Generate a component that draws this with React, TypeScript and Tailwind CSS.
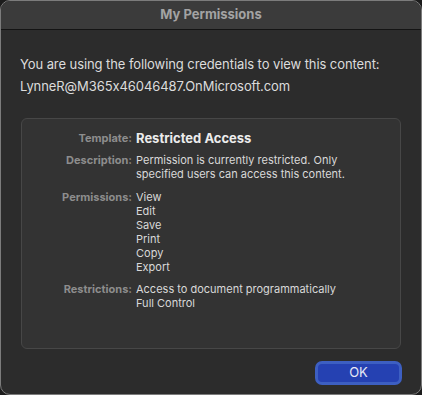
const rows = [
  { label: "Description:", values: ["Permission is currently restricted. Only", "specified users can access this content."] },
  { label: "Permissions:", values: ["View", "Edit", "Save", "Print", "Copy", "Export"] },
  { label: "Restrictions:", values: ["Access to document programmatically", "Full Control"] },
];

function Row({ label, values, mt }: { label: string; values: string[]; mt: string }) {
  return (
    <div className={`flex ${mt}`}>
      <div className="w-[114px] shrink-0 text-right pr-[4px] text-[11px] leading-[14px] font-bold text-[#8d8d8d]">{label}</div>
      <div className="text-[11px] leading-[14px] text-[#d9d9d9]">
        {values.map((v) => (
          <div key={v}>{v}</div>
        ))}
      </div>
    </div>
  );
}

export default function App() {
  return (
    <div
      className="w-[422px] h-[395px] bg-[#1c1c1c] [font-feature-settings:'calt'_0]"
      style={{ fontFamily: "Inter, 'Noto Sans', sans-serif" }}
    >
      <div className="w-full h-full rounded-[10px] border border-[#7c7c7c] bg-[#2c2c2c] overflow-hidden flex flex-col">
        <div className="h-[29px] shrink-0 bg-[#3b3b3b] border-b border-[#141414] flex items-center justify-center">
          <span className="text-[13px] font-bold text-[#a3a3a3]">My Permissions</span>
        </div>
        <div className="px-[19px] pt-[23px] text-[13px] leading-[22px] tracking-[-0.08px] text-[#dcdcdc]">
          <div>You are using the following credentials to view this content:</div>
          <div>LynneR@M365x46046487.OnMicrosoft.com</div>
        </div>
        <div className="mx-[20px] mt-[21px] h-[231px] rounded-[6px] border border-[#474747] bg-[#333333] pt-[11px]">
          <div className="flex items-center">
            <div className="w-[114px] shrink-0 text-right pr-[4px] text-[11px] leading-[16px] font-bold text-[#8d8d8d]">Template:</div>
            <div className="text-[13px] leading-[16px] font-bold text-[#ececec]">Restricted Access</div>
          </div>
          <Row label={rows[0].label} values={rows[0].values} mt="mt-[7px]" />
          <Row label={rows[1].label} values={rows[1].values} mt="mt-[9px]" />
          <Row label={rows[2].label} values={rows[2].values} mt="mt-[8px]" />
        </div>
        <div className="flex justify-end pr-[19px] mt-[12px]">
          <button className="w-[87px] h-[24px] rounded-[7px] border-[3px] border-[#3d5fc2] bg-[#2541b2] text-[13px] text-[#e6e8f5] flex items-center justify-center">
            OK
          </button>
        </div>
      </div>
    </div>
  );
}
